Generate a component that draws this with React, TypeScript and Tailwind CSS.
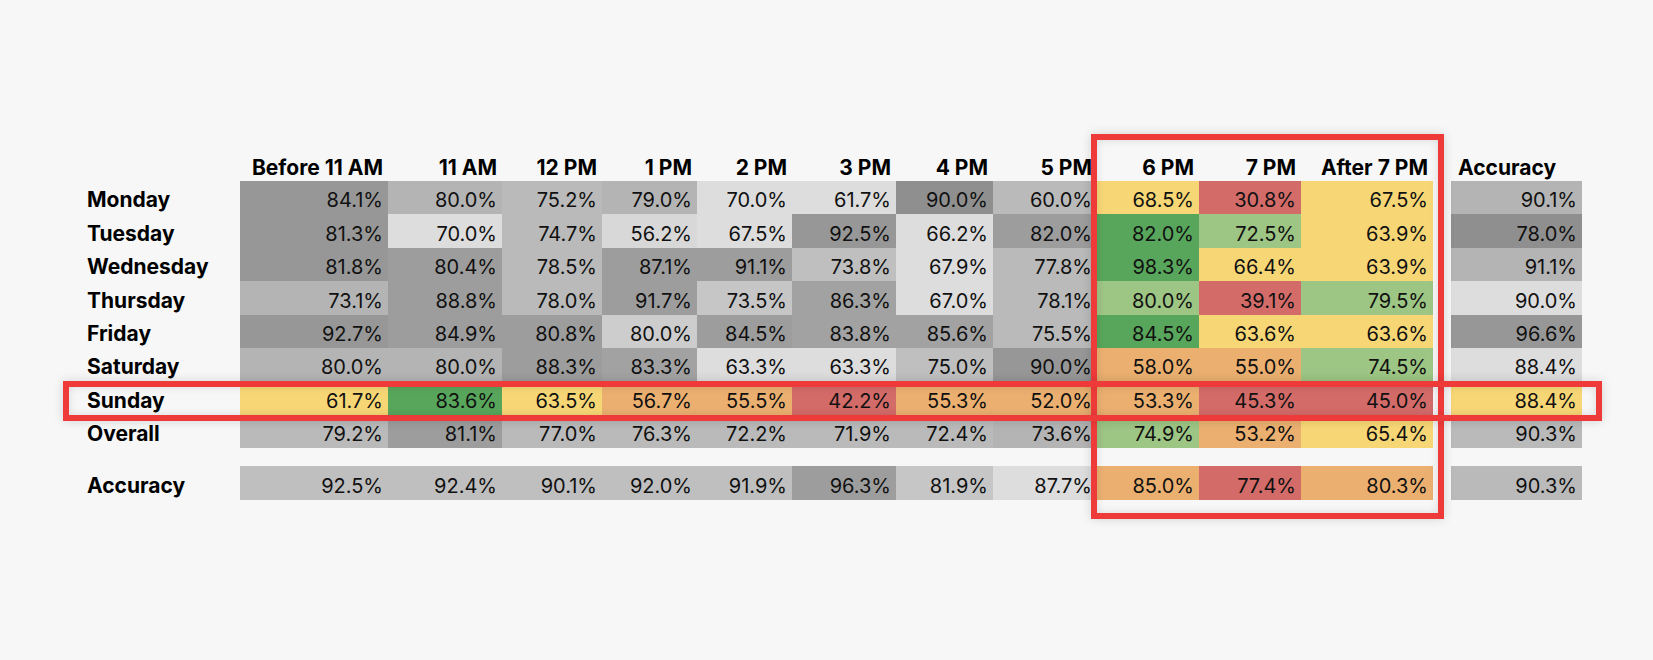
import React from "react";

const BG: Record<string, string> = {
  a: "bg-[#8f8f8f]",
  b: "bg-[#979797]",
  c: "bg-[#9d9d9d]",
  d: "bg-[#a2a2a2]",
  e: "bg-[#b4b4b4]",
  f: "bg-[#bababa]",
  g: "bg-[#bfbfbf]",
  h: "bg-[#c6c6c6]",
  i: "bg-[#cdcdcd]",
  j: "bg-[#d8d8d8]",
  k: "bg-[#dddddd]",
  G: "bg-[#58a65b]",
  L: "bg-[#9dc584]",
  Y: "bg-[#f7d775]",
  O: "bg-[#ebb070]",
  R: "bg-[#d36b69]",
};

const headers = [
  "Before 11 AM",
  "11 AM",
  "12 PM",
  "1 PM",
  "2 PM",
  "3 PM",
  "4 PM",
  "5 PM",
  "6 PM",
  "7 PM",
  "After 7 PM",
];

type Cell = [string, string];

const rows: { label: string; cells: Cell[]; acc: Cell }[] = [
  {
    label: "Monday",
    cells: [
      ["84.1%", "b"], ["80.0%", "e"], ["75.2%", "f"], ["79.0%", "e"], ["70.0%", "k"], ["61.7%", "k"], ["90.0%", "a"], ["60.0%", "f"],
      ["68.5%", "Y"], ["30.8%", "R"], ["67.5%", "Y"],
    ],
    acc: ["90.1%", "e"],
  },
  {
    label: "Tuesday",
    cells: [
      ["81.3%", "b"], ["70.0%", "k"], ["74.7%", "f"], ["56.2%", "j"], ["67.5%", "k"], ["92.5%", "b"], ["66.2%", "k"], ["82.0%", "c"],
      ["82.0%", "G"], ["72.5%", "L"], ["63.9%", "Y"],
    ],
    acc: ["78.0%", "a"],
  },
  {
    label: "Wednesday",
    cells: [
      ["81.8%", "b"], ["80.4%", "c"], ["78.5%", "f"], ["87.1%", "c"], ["91.1%", "c"], ["73.8%", "g"], ["67.9%", "k"], ["77.8%", "f"],
      ["98.3%", "G"], ["66.4%", "Y"], ["63.9%", "Y"],
    ],
    acc: ["91.1%", "e"],
  },
  {
    label: "Thursday",
    cells: [
      ["73.1%", "e"], ["88.8%", "c"], ["78.0%", "f"], ["91.7%", "c"], ["73.5%", "h"], ["86.3%", "d"], ["67.0%", "k"], ["78.1%", "f"],
      ["80.0%", "L"], ["39.1%", "R"], ["79.5%", "L"],
    ],
    acc: ["90.0%", "k"],
  },
  {
    label: "Friday",
    cells: [
      ["92.7%", "b"], ["84.9%", "c"], ["80.8%", "c"], ["80.0%", "i"], ["84.5%", "c"], ["83.8%", "d"], ["85.6%", "d"], ["75.5%", "f"],
      ["84.5%", "G"], ["63.6%", "Y"], ["63.6%", "Y"],
    ],
    acc: ["96.6%", "b"],
  },
  {
    label: "Saturday",
    cells: [
      ["80.0%", "e"], ["80.0%", "e"], ["88.3%", "c"], ["83.3%", "d"], ["63.3%", "k"], ["63.3%", "k"], ["75.0%", "g"], ["90.0%", "b"],
      ["58.0%", "O"], ["55.0%", "O"], ["74.5%", "L"],
    ],
    acc: ["88.4%", "k"],
  },
  {
    label: "Sunday",
    cells: [
      ["61.7%", "Y"], ["83.6%", "G"], ["63.5%", "Y"], ["56.7%", "O"], ["55.5%", "O"], ["42.2%", "R"], ["55.3%", "O"], ["52.0%", "O"],
      ["53.3%", "O"], ["45.3%", "R"], ["45.0%", "R"],
    ],
    acc: ["88.4%", "Y"],
  },
  {
    label: "Overall",
    cells: [
      ["79.2%", "f"], ["81.1%", "c"], ["77.0%", "f"], ["76.3%", "f"], ["72.2%", "f"], ["71.9%", "f"], ["72.4%", "f"], ["73.6%", "e"],
      ["74.9%", "L"], ["53.2%", "O"], ["65.4%", "Y"],
    ],
    acc: ["90.3%", "f"],
  },
];

const accuracyRow: { cells: Cell[]; acc: Cell } = {
  cells: [
    ["92.5%", "g"], ["92.4%", "g"], ["90.1%", "g"], ["92.0%", "g"], ["91.9%", "g"], ["96.3%", "c"], ["81.9%", "h"], ["87.7%", "k"],
    ["85.0%", "O"], ["77.4%", "R"], ["80.3%", "O"],
  ],
  acc: ["90.3%", "f"],
};

const cols =
  "grid grid-cols-[153px_148px_114px_100px_95px_95px_104px_97px_104px_102px_102px_132px_18px_131px]";

function ValueCell({ cell }: { cell: Cell }) {
  return (
    <div
      className={`${BG[cell[1]]} h-[33.4px] flex items-end justify-end pr-[5px] pb-[2px] text-[20px] leading-[24px] text-[#111111]`}
    >
      {cell[0]}
    </div>
  );
}

function Row({ label, cells, acc }: { label: string; cells: Cell[]; acc: Cell }) {
  return (
    <div className={cols}>
      <div className="h-[33.4px] flex items-end pb-[2px] text-[21px] leading-[24px] font-bold text-black">
        {label}
      </div>
      {cells.map((c, i) => (
        <ValueCell key={i} cell={c} />
      ))}
      <div />
      <ValueCell cell={acc} />
    </div>
  );
}

export default function App() {
  return (
    <div
      className="relative w-[1653px] h-[660px] bg-[#f7f7f7] overflow-hidden"
      style={{ fontFamily: "Inter, 'Noto Sans', sans-serif" }}
    >
      <div className="pl-[87px] pt-[150px] flex flex-col">
        <div className={`${cols} h-[31px]`}>
          <div />
          {headers.map((h) => (
            <div
              key={h}
              className="flex items-end justify-end pr-[5px] pb-[1px] text-[21px] leading-[24px] font-bold text-black whitespace-nowrap"
            >
              {h}
            </div>
          ))}
          <div />
          <div className="flex items-end pl-[7px] pb-[1px] text-[21px] leading-[24px] font-bold text-black">
            Accuracy
          </div>
        </div>
        {rows.map((r) => (
          <Row key={r.label} label={r.label} cells={r.cells} acc={r.acc} />
        ))}
        <div className="h-[18.3px]" />
        <Row label="Accuracy" cells={accuracyRow.cells} acc={accuracyRow.acc} />
      </div>

      {/* Highlight overlays */}
      <div className="absolute left-[1091px] top-[134px] w-[353px] h-[385px] border-[6px] border-[#ef3a3a] shadow-[0_0_10px_rgba(0,0,0,0.15),inset_0_0_8px_rgba(0,0,0,0.12)] pointer-events-none" />
      <div className="absolute left-[63px] top-[381px] w-[1539px] h-[40px] border-[6px] border-[#ef3a3a] shadow-[0_0_10px_rgba(0,0,0,0.15),inset_0_0_8px_rgba(0,0,0,0.12)] pointer-events-none" />
    </div>
  );
}
